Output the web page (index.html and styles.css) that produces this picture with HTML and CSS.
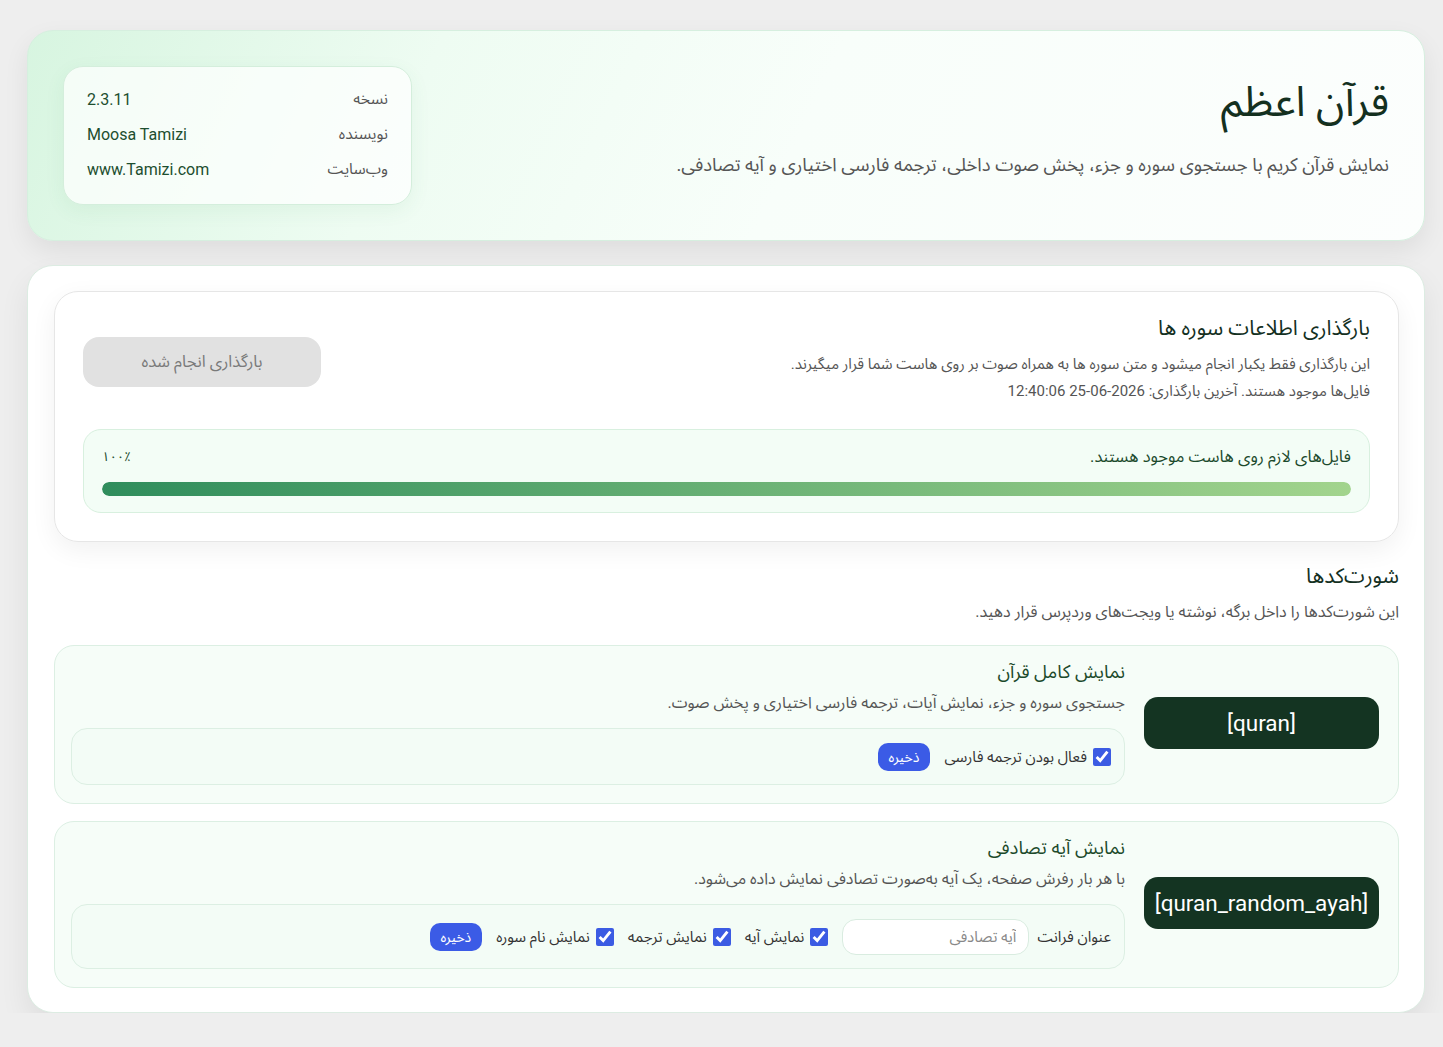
FILE: index.html
```html
<!DOCTYPE html>
<html lang="fa" dir="rtl">
<head>
    <meta charset="UTF-8">
    <meta name="viewport" content="width=device-width, initial-scale=1.0">
    <title>قرآن اعظم</title>
    <link rel="stylesheet" href="styles.css">
</head>
<body>
    <div class="wrap">
        <div class="hero">
            <div class="hero-text">
                <h1>قرآن اعظم</h1>
                <p>نمایش قرآن کریم با جستجوی سوره و جزء، پخش صوت داخلی، ترجمه فارسی اختیاری و آیه تصادفی.</p>
            </div>
            <div class="info-card">
                <div class="info-row"><span class="info-label">نسخه</span><span class="info-value">2.3.11</span></div>
                <div class="info-row"><span class="info-label">نویسنده</span><span class="info-value">Moosa Tamizi</span></div>
                <div class="info-row"><span class="info-label">وب‌سایت</span><span class="info-value">www.Tamizi.com</span></div>
            </div>
        </div>

        <div class="panel">
            <div class="load-box">
                <div class="load-top">
                    <div class="load-text">
                        <h2>بارگذاری اطلاعات سوره ها</h2>
                        <p>این بارگذاری فقط یکبار انجام میشود و متن سوره ها به همراه صوت بر روی هاست شما قرار میگیرند.</p>
                        <p>فایل‌ها موجود هستند. آخرین بارگذاری: 2026-06-25 12:40:06</p>
                    </div>
                    <button class="load-btn" disabled>بارگذاری انجام شده</button>
                </div>
                <div class="progress-box">
                    <div class="progress-head">
                        <span>فایل‌های لازم روی هاست موجود هستند.</span>
                        <span class="progress-pct">۱۰۰٪</span>
                    </div>
                    <div class="progress-track"><div class="progress-fill" style="width: 100%"></div></div>
                </div>
            </div>

            <h2 class="sc-title">شورت‌کدها</h2>
            <p class="sc-desc">این شورت‌کدها را داخل برگه، نوشته یا ویجت‌های وردپرس قرار دهید.</p>

            <div class="sc-card">
                <div class="sc-code">[quran]</div>
                <div class="sc-body">
                    <h3>نمایش کامل قرآن</h3>
                    <p>جستجوی سوره و جزء، نمایش آیات، ترجمه فارسی اختیاری و پخش صوت.</p>
                    <div class="sc-options">
                        <label class="check"><input type="checkbox" checked> فعال بودن ترجمه فارسی</label>
                        <button class="save-btn">ذخیره</button>
                    </div>
                </div>
            </div>

            <div class="sc-card">
                <div class="sc-code">[quran_random_ayah]</div>
                <div class="sc-body">
                    <h3>نمایش آیه تصادفی</h3>
                    <p>با هر بار رفرش صفحه، یک آیه به‌صورت تصادفی نمایش داده می‌شود.</p>
                    <div class="sc-options">
                        <label class="field">عنوان فرانت <input type="text" placeholder="آیه تصادفی"></label>
                        <label class="check"><input type="checkbox" checked> نمایش آیه</label>
                        <label class="check"><input type="checkbox" checked> نمایش ترجمه</label>
                        <label class="check"><input type="checkbox" checked> نمایش نام سوره</label>
                        <button class="save-btn">ذخیره</button>
                    </div>
                </div>
            </div>
        </div>
    </div>
</body>
</html>
```

FILE: styles.css
```css
body {
    margin: 0;
    padding-top: 1px;
    background-color: #eeeeee;
    font-family: Roboto, "Noto Sans Arabic", "DejaVu Sans", sans-serif;
    color: #333;
}
.wrap {
    margin: 29px 18px 0 27px;
}

/* bandeau du haut */
.hero {
    display: flex;
    justify-content: space-between;
    align-items: center;
    padding: 35px 35px;
    border: 1px solid #d6efdf;
    border-radius: 26px;
    background: linear-gradient(115deg, #d7f5e0 0%, #eefcf2 28%, #f8fefa 55%, #fcfefd 100%);
    box-shadow: 0 10px 26px rgba(0, 0, 0, 0.07);
}
.hero-text {
    align-self: flex-start;
    margin-top: 11px;
}
.hero-text h1 {
    margin: 0 0 24px;
    font-size: 42px;
    font-weight: 400;
    line-height: 50px;
    color: #14301f;
}
.hero-text p {
    margin: 0;
    font-size: 18.5px;
    line-height: 28px;
    color: #555;
}
.info-card {
    width: 301px;
    padding: 15px 23px 17px;
    border: 1px solid #d4eedc;
    border-radius: 20px;
    background-color: rgba(255, 255, 255, 0.72);
    box-shadow: 0 6px 20px rgba(60, 140, 90, 0.07);
}
.info-row {
    display: flex;
    justify-content: space-between;
    line-height: 35px;
}
.info-label {
    font-size: 15.5px;
    color: #555;
}
.info-value {
    font-size: 16px;
    color: #1d4e2f;
}

/* carte principale */
.panel {
    margin-top: 24px;
    padding: 25px 25px 24px 26px;
    background-color: #fff;
    border: 1px solid #dcece2;
    border-radius: 26px;
    box-shadow: 0 14px 30px rgba(0, 0, 0, 0.07);
}
.load-box {
    padding: 22px 28px 28px;
    border: 1px solid #e6e6e6;
    border-radius: 24px;
    box-shadow: 0 8px 26px rgba(0, 0, 0, 0.06);
}
.load-top {
    display: flex;
    justify-content: space-between;
    align-items: center;
    margin-bottom: 24px;
}
.load-text h2 {
    margin: 0 0 9px;
    font-size: 21px;
    font-weight: 400;
    line-height: 28px;
    color: #14301f;
}
.load-text p {
    margin: 0;
    font-size: 15px;
    line-height: 27px;
    color: #555;
}
.load-btn {
    width: 238px;
    height: 50px;
    margin-top: 4px;
    border: none;
    border-radius: 16px;
    background-color: #e1e1e1;
    color: #7a7a7a;
    font-family: inherit;
    font-size: 16.5px;
}
.progress-box {
    padding: 16px 18px;
    border: 1px solid #d8f0df;
    border-radius: 18px;
    background-color: #f3fdf6;
}
.progress-head {
    display: flex;
    justify-content: space-between;
    font-size: 16.5px;
    line-height: 22px;
    color: #1b4a2c;
    margin-bottom: 14px;
}
.progress-pct {
    font-size: 13px;
}
.progress-track {
    height: 14px;
    border-radius: 7px;
    background-color: #e3f1e7;
    overflow: hidden;
}
.progress-fill {
    height: 100%;
    border-radius: 7px;
    background: linear-gradient(to left, #a2d48d, #2f8d5c);
}

/* shortcodes */
.sc-title {
    margin: 20px 0 10px;
    font-size: 21px;
    font-weight: 400;
    line-height: 28px;
    color: #14301f;
}
.sc-desc {
    margin: 0 0 21px;
    font-size: 16px;
    line-height: 24px;
    color: #555;
}
.sc-card {
    display: flex;
    align-items: center;
    gap: 19px;
    padding: 14px 19px 18px 16px;
    margin-bottom: 17px;
    border: 1px solid #dcefe3;
    border-radius: 20px;
    background-color: #f6fdf8;
}
.sc-card:last-child {
    margin-bottom: 0;
}
.sc-code {
    flex: 0 0 235px;
    height: 52px;
    display: flex;
    align-items: center;
    justify-content: center;
    border-radius: 14px;
    background-color: #143422;
    color: #fff;
    font-family: Roboto, sans-serif;
    font-size: 22.5px;
    direction: ltr;
    white-space: nowrap;
}
.sc-body {
    flex: 1;
}
.sc-body h3 {
    margin: 0 0 7px;
    font-size: 18.5px;
    font-weight: 400;
    line-height: 24px;
    color: #1c4a2b;
}
.sc-body p {
    margin: 0 0 13px;
    font-size: 16px;
    line-height: 24px;
    color: #555;
}
.sc-options {
    display: flex;
    align-items: center;
    gap: 14px;
    padding: 14px 13px 13px;
    border: 1px solid #dcefe3;
    border-radius: 16px;
    background-color: #f3fcf6;
    font-size: 15px;
    line-height: 22px;
    color: #333;
}
.check {
    display: flex;
    align-items: center;
    gap: 6px;
}
.check input {
    width: 18px;
    height: 18px;
    margin: 0;
    accent-color: #3b5be3;
}
.field {
    display: flex;
    align-items: center;
    gap: 8px;
}
.field input {
    width: 187px;
    height: 36px;
    box-sizing: border-box;
    padding: 0 12px;
    border: 1px solid #d9ece0;
    border-radius: 14px;
    background-color: #fff;
    font-family: inherit;
    font-size: 15px;
}
.field input::placeholder {
    color: #888;
}
.save-btn {
    height: 28px;
    padding: 0 11px;
    border: none;
    border-radius: 10px;
    background-color: #3b5be6;
    color: #fff;
    font-family: inherit;
    font-size: 14px;
    line-height: 28px;
}
```
